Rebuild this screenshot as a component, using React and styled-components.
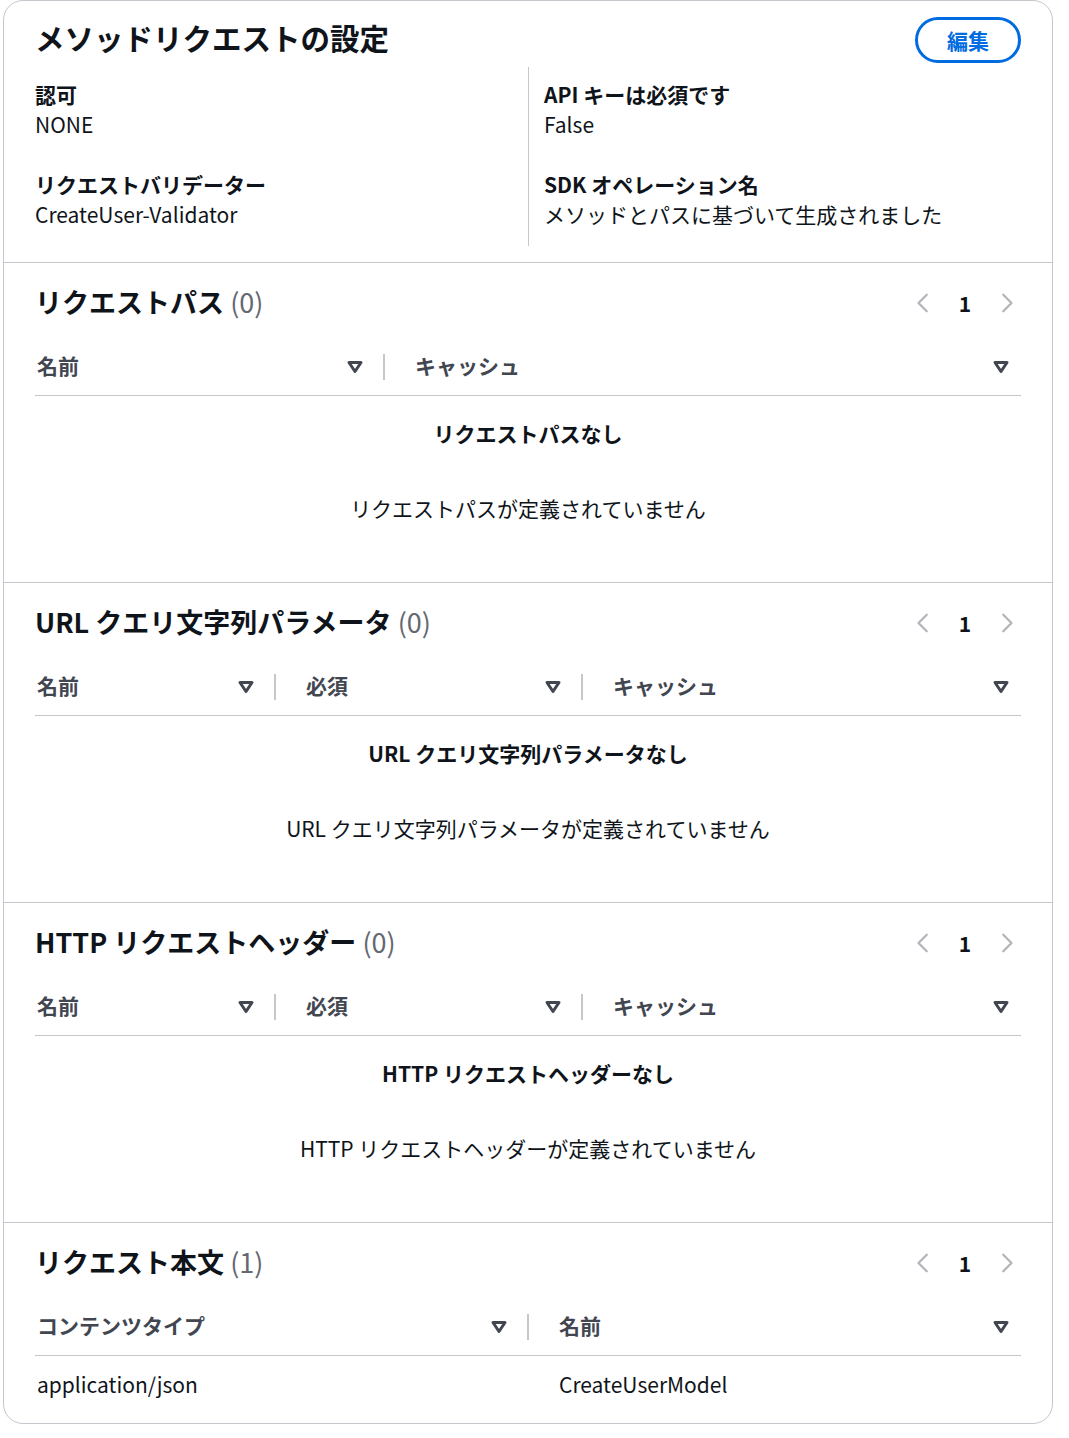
import styled, { createGlobalStyle } from "styled-components"

const GlobalStyle = createGlobalStyle`
    body {
        margin: 0;
        background: #ffffff;
        font-family: "Noto Sans CJK JP", "Noto Sans", sans-serif;
        color: #0f141a;
    }
`

const Page = styled.div`
    padding: 0 16px 14px 3px;
`

const Card = styled.div`
    width: 1050px;
    box-sizing: border-box;
    border: 1px solid #c6c6cd;
    border-radius: 20px;
    background: #ffffff;
    overflow: hidden;
`

const Header = styled.div`
    padding: 16px 31px 16px 31px;
`

const HeaderRow = styled.div`
    display: flex;
    justify-content: space-between;
    align-items: flex-start;
`

const MainTitle = styled.h2`
    margin: 0;
    font-size: 29.5px;
    line-height: 40px;
    font-weight: 700;
`

const EditButton = styled.button`
    box-sizing: border-box;
    width: 106px;
    height: 46px;
    border: 3px solid #006ce0;
    border-radius: 23px;
    background: #ffffff;
    color: #006ce0;
    font-family: inherit;
    font-size: 21px;
    font-weight: 700;
    cursor: pointer;
`

const Columns = styled.div`
    display: grid;
    grid-template-columns: 1fr 1fr;
    margin-top: 4px;
`

const Column = styled.div`
    display: flex;
    flex-direction: column;
    gap: 30px;
    padding: 12px 16px 17px ${(props) => (props.divided ? "15px" : "0")};
    border-left: ${(props) => (props.divided ? "1px solid #c6c6cd" : "none")};
`

const Pair = styled.div`
    display: flex;
    flex-direction: column;
`

const Label = styled.div`
    font-size: 21px;
    line-height: 30px;
    font-weight: 700;
`

const Value = styled.div`
    font-size: 21px;
    line-height: 30px;
`

const Section = styled.section`
    border-top: 1px solid #c6c6cd;
    padding: 22px 31px ${(props) => props.bottom || "0"} 31px;
`

const TitleRow = styled.div`
    display: flex;
    justify-content: space-between;
    align-items: center;
    height: 36px;
`

const SectionTitle = styled.h2`
    margin: 0 0 3px 0;
    font-size: 27px;
    line-height: 33px;
    font-weight: 700;
    span {
        font-weight: 400;
        color: #656871;
    }
`

const Pager = styled.div`
    display: flex;
    align-items: center;
    gap: 18px;
    margin-right: 2px;
`

const PageNumber = styled.span`
    width: 24px;
    text-align: center;
    font-size: 21px;
    font-weight: 700;
    line-height: 30px;
`

const Table = styled.div`
    display: grid;
    grid-template-columns: ${(props) => props.cols};
    margin-top: 18px;
`

const HeadCell = styled.div`
    display: flex;
    align-items: center;
    padding: 11px ${(props) => (props.last ? "8px" : "0")} 15px ${(props) => (props.first ? "2px" : "30px")};
    border-bottom: 1px solid #c6c6cd;
    color: #424650;
    font-size: 21px;
    line-height: 30px;
    font-weight: 700;
`

const HeadText = styled.span`
    flex: 1;
`

const SortBox = styled.span`
    display: flex;
    margin-top: 4px;
`

const Divider = styled.span`
    width: 2px;
    height: 26px;
    margin: 4px 0 0 16px;
    background: #c6c6cd;
`

const Cell = styled.div`
    padding: 13px 0 0 ${(props) => (props.first ? "2px" : "30px")};
    font-size: 21px;
    line-height: 30px;
`

const Empty = styled.div`
    grid-column: 1 / -1;
    display: flex;
    flex-direction: column;
    align-items: center;
    gap: 45px;
    padding: 22px 0 59px 0;
    font-size: 21px;
    line-height: 30px;
`

const EmptyTitle = styled.div`
    font-weight: 700;
`

function Chevron({ left }) {
    return (
        <svg width="24" height="24" viewBox="0 0 16 16" fill="none" stroke="#b4b4bb" strokeWidth="1.5" strokeLinecap="round" strokeLinejoin="round">
            <path d={left ? "M10.5 2.5 5 8l5.5 5.5" : "M5.5 2.5 11 8l-5.5 5.5"} />
        </svg>
    )
}

function SortIcon() {
    return (
        <SortBox>
            <svg width="24" height="24" viewBox="0 0 16 16" fill="none" stroke="#424650" strokeWidth="2" strokeLinejoin="round">
                <path d="M4 5h8l-4 6-4-6z" />
            </svg>
        </SortBox>
    )
}

function Pagination() {
    return (
        <Pager>
            <Chevron left />
            <PageNumber>1</PageNumber>
            <Chevron />
        </Pager>
    )
}

function TableBlock({ title, count, cols, headers, empty, rows, bottom }) {
    return (
        <Section bottom={bottom}>
            <TitleRow>
                <SectionTitle>
                    {title} <span>({count})</span>
                </SectionTitle>
                <Pagination />
            </TitleRow>
            <Table cols={cols}>
                {headers.map((h, i) => {
                    const last = i === headers.length - 1
                    return (
                        <HeadCell key={h} first={i === 0} last={last}>
                            <HeadText>{h}</HeadText>
                            <SortIcon />
                            {!last && <Divider />}
                        </HeadCell>
                    )
                })}
                {empty && (
                    <Empty>
                        <EmptyTitle>{empty[0]}</EmptyTitle>
                        <div>{empty[1]}</div>
                    </Empty>
                )}
                {rows &&
                    rows.map((row) =>
                        row.map((c, i) => (
                            <Cell key={c} first={i === 0}>
                                {c}
                            </Cell>
                        ))
                    )}
            </Table>
        </Section>
    )
}

export default function App() {
    return (
        <Page>
            <GlobalStyle />
            <Card>
                <Header>
                    <HeaderRow>
                        <MainTitle>メソッドリクエストの設定</MainTitle>
                        <EditButton>編集</EditButton>
                    </HeaderRow>
                    <Columns>
                        <Column>
                            <Pair>
                                <Label>認可</Label>
                                <Value>NONE</Value>
                            </Pair>
                            <Pair>
                                <Label>リクエストバリデーター</Label>
                                <Value>CreateUser-Validator</Value>
                            </Pair>
                        </Column>
                        <Column divided>
                            <Pair>
                                <Label>API キーは必須です</Label>
                                <Value>False</Value>
                            </Pair>
                            <Pair>
                                <Label>SDK オペレーション名</Label>
                                <Value>メソッドとパスに基づいて生成されました</Value>
                            </Pair>
                        </Column>
                    </Columns>
                </Header>
                <TableBlock
                    title="リクエストパス"
                    count={0}
                    cols="350px 1fr"
                    headers={["名前", "キャッシュ"]}
                    empty={["リクエストパスなし", "リクエストパスが定義されていません"]}
                />
                <TableBlock
                    title="URL クエリ文字列パラメータ"
                    count={0}
                    cols="241px 307px 1fr"
                    headers={["名前", "必須", "キャッシュ"]}
                    empty={["URL クエリ文字列パラメータなし", "URL クエリ文字列パラメータが定義されていません"]}
                />
                <TableBlock
                    title="HTTP リクエストヘッダー"
                    count={0}
                    cols="241px 307px 1fr"
                    headers={["名前", "必須", "キャッシュ"]}
                    empty={["HTTP リクエストヘッダーなし", "HTTP リクエストヘッダーが定義されていません"]}
                />
                <TableBlock
                    title="リクエスト本文"
                    count={1}
                    cols="494px 1fr"
                    headers={["コンテンツタイプ", "名前"]}
                    rows={[["application/json", "CreateUserModel"]]}
                    bottom="24px"
                />
            </Card>
        </Page>
    )
}
